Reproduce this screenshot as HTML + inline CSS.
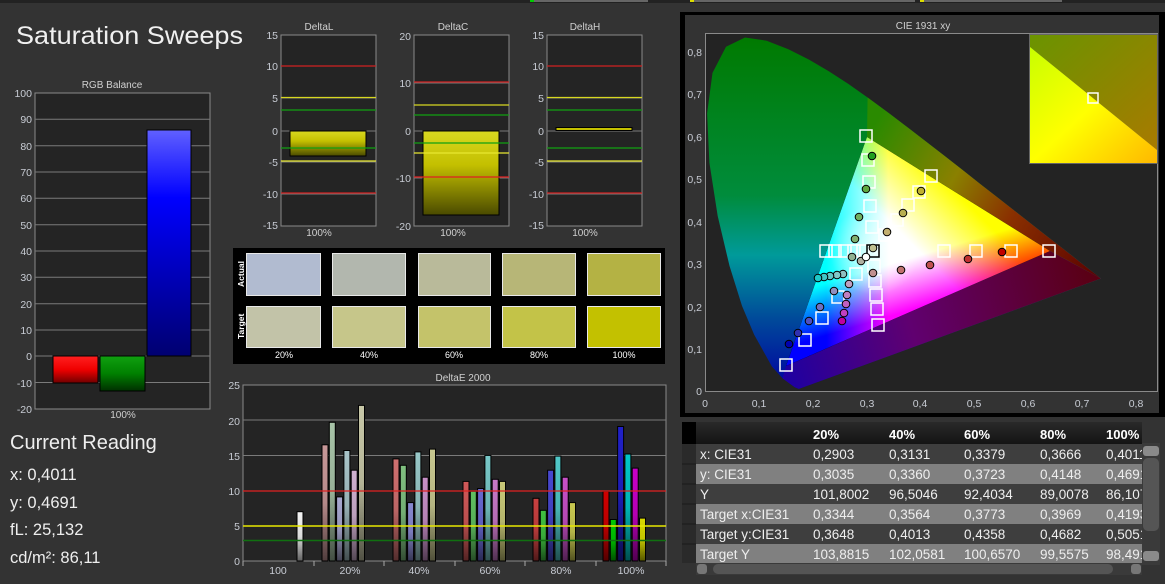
<!DOCTYPE html>
<html><head><meta charset="utf-8"><style>
html,body{margin:0;padding:0;background:#333;}
body{width:1165px;height:579px;overflow:hidden;position:relative;font-family:"Liberation Sans",sans-serif;}
svg text{font-family:"Liberation Sans",sans-serif;}
</style></head><body>
<svg width="1165" height="579" viewBox="0 0 1165 579" xmlns="http://www.w3.org/2000/svg">
<defs>
<clipPath id="tclip"><rect x="682" y="420" width="460" height="145"/></clipPath>
<linearGradient id="shade" x1="0" y1="0" x2="0" y2="1"><stop offset="0" stop-color="#000" stop-opacity="0"/><stop offset="0.5" stop-color="#000" stop-opacity="0.1"/><stop offset="1" stop-color="#000" stop-opacity="0.6"/></linearGradient>
<linearGradient id="gy" x1="0" y1="0" x2="0" y2="1"><stop offset="0" stop-color="#d8d820"/><stop offset="0.4" stop-color="#c4c000"/><stop offset="1" stop-color="#4a4a00"/></linearGradient>
<linearGradient id="gr" x1="0" y1="0" x2="0" y2="1"><stop offset="0" stop-color="#ff2020"/><stop offset="0.5" stop-color="#f00000"/><stop offset="1" stop-color="#700000"/></linearGradient>
<linearGradient id="gg" x1="0" y1="0" x2="0" y2="1"><stop offset="0" stop-color="#10a010"/><stop offset="0.5" stop-color="#008000"/><stop offset="1" stop-color="#003000"/></linearGradient>
<linearGradient id="gb" x1="0" y1="0" x2="0" y2="1"><stop offset="0" stop-color="#6060ff"/><stop offset="0.3" stop-color="#0000ff"/><stop offset="1" stop-color="#000070"/></linearGradient>
<linearGradient id="hs" x1="0" y1="37" x2="0" y2="389" gradientUnits="userSpaceOnUse"><stop offset="0" stop-color="#007a00"/><stop offset="0.45" stop-color="#008c3c"/><stop offset="0.62" stop-color="#009a9a"/><stop offset="0.8" stop-color="#004a9a"/><stop offset="1" stop-color="#0000a0"/></linearGradient>
<linearGradient id="rt" x1="867" y1="137" x2="1101" y2="278" gradientUnits="userSpaceOnUse"><stop offset="0" stop-color="#2a8a00"/><stop offset="0.35" stop-color="#8a8000"/><stop offset="0.6" stop-color="#8a3000"/><stop offset="1" stop-color="#5a0000"/></linearGradient>
<linearGradient id="bt" x1="786" y1="366" x2="1101" y2="278" gradientUnits="userSpaceOnUse"><stop offset="0" stop-color="#2000a0"/><stop offset="0.4" stop-color="#600070"/><stop offset="1" stop-color="#5a0010"/></linearGradient>
<linearGradient id="tR" x1="1050" y1="251" x2="826" y2="252" gradientUnits="userSpaceOnUse"><stop offset="0" stop-color="#ff0000"/><stop offset="0.72" stop-color="#ff0000"/><stop offset="1" stop-color="#000"/></linearGradient>
<linearGradient id="tG" x1="867" y1="137" x2="918" y2="308" gradientUnits="userSpaceOnUse"><stop offset="0" stop-color="#00ff00"/><stop offset="0.72" stop-color="#00ff00"/><stop offset="1" stop-color="#000"/></linearGradient>
<linearGradient id="tB" x1="786" y1="366" x2="958" y2="194" gradientUnits="userSpaceOnUse"><stop offset="0" stop-color="#0000ff"/><stop offset="0.72" stop-color="#0000ff"/><stop offset="1" stop-color="#000"/></linearGradient>
<radialGradient id="tW" cx="875" cy="250" r="45" gradientUnits="userSpaceOnUse"><stop offset="0" stop-color="#fff" stop-opacity="0.7"/><stop offset="1" stop-color="#fff" stop-opacity="0"/></radialGradient>
<linearGradient id="inU" x1="0" y1="0" x2="1" y2="1"><stop offset="0" stop-color="#6a9400"/><stop offset="1" stop-color="#a87a00"/></linearGradient>
<linearGradient id="inL" x1="0" y1="0" x2="1" y2="1"><stop offset="0" stop-color="#c8ff00"/><stop offset="0.5" stop-color="#ffff00"/><stop offset="1" stop-color="#ffb800"/></linearGradient>
<linearGradient id="th" x1="0" y1="0" x2="0" y2="1"><stop offset="0" stop-color="#2a2a2a"/><stop offset="1" stop-color="#141414"/></linearGradient>
</defs>

<rect x="0" y="0" width="1165" height="3" fill="#222"/>
<rect x="530" y="0" width="118" height="2" fill="#666"/><rect x="530" y="0" width="4" height="2" fill="#0c0"/>
<rect x="690" y="0" width="225" height="2" fill="#666"/><rect x="690" y="0" width="4" height="2" fill="#dd0"/>
<rect x="920" y="0" width="142" height="2" fill="#666"/><rect x="920" y="0" width="4" height="2" fill="#dd0"/>

<text x="16" y="44" font-size="25" fill="#f0f0f0" textLength="227" lengthAdjust="spacingAndGlyphs">Saturation Sweeps</text>

<!-- RGB Balance -->
<text x="112" y="88" font-size="10" fill="#d0d0d0" text-anchor="middle">RGB Balance</text>
<rect x="35" y="93" width="175" height="316" fill="#242424" stroke="#8a8a8a"/>
<g stroke="#7a7a7a" stroke-width="1">
<line x1="35" x2="210" y1="119.3" y2="119.3"/><line x1="35" x2="210" y1="145.7" y2="145.7"/><line x1="35" x2="210" y1="172" y2="172"/><line x1="35" x2="210" y1="198.3" y2="198.3"/><line x1="35" x2="210" y1="224.7" y2="224.7"/><line x1="35" x2="210" y1="251" y2="251"/><line x1="35" x2="210" y1="277.3" y2="277.3"/><line x1="35" x2="210" y1="303.7" y2="303.7"/><line x1="35" x2="210" y1="330" y2="330"/><line x1="35" x2="210" y1="356" y2="356"/><line x1="35" x2="210" y1="382.5" y2="382.5"/>
</g>
<g font-size="10.5" fill="#c8ccd4" text-anchor="end">
<text x="32" y="97">100</text><text x="32" y="123">90</text><text x="32" y="150">80</text><text x="32" y="176">70</text><text x="32" y="202">60</text><text x="32" y="229">50</text><text x="32" y="255">40</text><text x="32" y="281">30</text><text x="32" y="308">20</text><text x="32" y="334">10</text><text x="32" y="360">0</text><text x="32" y="387">-10</text><text x="32" y="413">-20</text>
</g>
<rect x="53" y="356" width="45" height="27" fill="url(#gr)" stroke="#000"/>
<rect x="100" y="356" width="45" height="35" fill="url(#gg)" stroke="#000"/>
<rect x="147" y="130" width="44" height="226" fill="url(#gb)" stroke="#000"/>
<text x="123" y="418" font-size="10" fill="#d0d0d0" text-anchor="middle">100%</text>

<g fill="#eeeeee">
<text x="10" y="449" font-size="20">Current Reading</text>
<text x="10" y="480" font-size="16.5">x: 0,4011</text>
<text x="10" y="508" font-size="16.5">y: 0,4691</text>
<text x="10" y="535" font-size="16.5">fL: 25,132</text>
<text x="10" y="563" font-size="16.5">cd/m²: 86,11</text>
</g>

<!-- DeltaL -->
<text x="319" y="30" font-size="10" fill="#d0d0d0" text-anchor="middle">DeltaL</text>
<rect x="281" y="35" width="95" height="191" fill="#242424" stroke="#8a8a8a"/>
<g stroke="#7a7a7a"><line x1="281" x2="376" y1="66" y2="66"/><line x1="281" x2="376" y1="98" y2="98"/><line x1="281" x2="376" y1="131" y2="131"/><line x1="281" x2="376" y1="162" y2="162"/><line x1="281" x2="376" y1="194" y2="194"/></g>
<rect x="290" y="131" width="76" height="25" fill="url(#gy)" stroke="#000"/>
<g stroke-width="1.3"><line x1="281" x2="376" y1="66" y2="66" stroke="#d02020"/><line x1="281" x2="376" y1="193" y2="193" stroke="#d02020"/><line x1="281" x2="376" y1="97.5" y2="97.5" stroke="#d8d820"/><line x1="281" x2="376" y1="161" y2="161" stroke="#e8e830"/><line x1="281" x2="376" y1="110" y2="110" stroke="#10a010"/><line x1="281" x2="376" y1="148" y2="148" stroke="#10a010"/></g>
<g font-size="10.5" fill="#c8ccd4" text-anchor="end"><text x="278" y="39">15</text><text x="278" y="70">10</text><text x="278" y="102">5</text><text x="278" y="135">0</text><text x="278" y="166">-5</text><text x="278" y="198">-10</text><text x="278" y="229">-15</text></g>
<text x="319" y="236" font-size="10" fill="#d0d0d0" text-anchor="middle">100%</text>

<!-- DeltaC -->
<text x="453" y="30" font-size="10" fill="#d0d0d0" text-anchor="middle">DeltaC</text>
<rect x="414" y="35" width="95" height="191" fill="#242424" stroke="#8a8a8a"/>
<g stroke="#7a7a7a"><line x1="414" x2="509" y1="83" y2="83"/><line x1="414" x2="509" y1="131" y2="131"/><line x1="414" x2="509" y1="178" y2="178"/></g>
<rect x="423" y="131" width="76" height="84" fill="url(#gy)" stroke="#000"/>
<g stroke-width="1.3"><line x1="414" x2="509" y1="82" y2="82" stroke="#d02020"/><line x1="414" x2="509" y1="177" y2="177" stroke="#e02020"/><line x1="414" x2="509" y1="105" y2="105" stroke="#d8d820"/><line x1="414" x2="509" y1="153" y2="153" stroke="#e8e830"/><line x1="414" x2="509" y1="115" y2="115" stroke="#10a010"/><line x1="414" x2="509" y1="143" y2="143" stroke="#10a010"/></g>
<g font-size="10.5" fill="#c8ccd4" text-anchor="end"><text x="411" y="40">20</text><text x="411" y="87">10</text><text x="411" y="135">0</text><text x="411" y="182">-10</text><text x="411" y="230">-20</text></g>
<text x="453" y="236" font-size="10" fill="#d0d0d0" text-anchor="middle">100%</text>

<!-- DeltaH -->
<text x="585" y="30" font-size="10" fill="#d0d0d0" text-anchor="middle">DeltaH</text>
<rect x="547" y="35" width="95" height="191" fill="#242424" stroke="#8a8a8a"/>
<g stroke="#7a7a7a"><line x1="547" x2="642" y1="66" y2="66"/><line x1="547" x2="642" y1="98" y2="98"/><line x1="547" x2="642" y1="131" y2="131"/><line x1="547" x2="642" y1="162" y2="162"/><line x1="547" x2="642" y1="194" y2="194"/></g>
<rect x="556" y="127.5" width="76" height="3" fill="#c4c000" stroke="#000"/>
<g stroke-width="1.3"><line x1="547" x2="642" y1="66" y2="66" stroke="#d02020"/><line x1="547" x2="642" y1="193" y2="193" stroke="#d02020"/><line x1="547" x2="642" y1="97.5" y2="97.5" stroke="#d8d820"/><line x1="547" x2="642" y1="161" y2="161" stroke="#e8e830"/><line x1="547" x2="642" y1="110" y2="110" stroke="#10a010"/><line x1="547" x2="642" y1="148" y2="148" stroke="#10a010"/></g>
<g font-size="10.5" fill="#c8ccd4" text-anchor="end"><text x="544" y="39">15</text><text x="544" y="70">10</text><text x="544" y="102">5</text><text x="544" y="135">0</text><text x="544" y="166">-5</text><text x="544" y="198">-10</text><text x="544" y="229">-15</text></g>
<text x="585" y="236" font-size="10" fill="#d0d0d0" text-anchor="middle">100%</text>

<!-- Swatches -->
<rect x="233" y="248" width="432" height="116" fill="#000"/>
<g stroke="#e8e8e8" stroke-width="1">
<rect x="246.5" y="253.5" width="74" height="42" fill="#b1bbd0"/><rect x="332.5" y="253.5" width="73" height="42" fill="#b2b7ae"/><rect x="418.5" y="253.5" width="72" height="42" fill="#b9ba9a"/><rect x="502.5" y="253.5" width="73" height="42" fill="#b7b677"/><rect x="587.5" y="253.5" width="73" height="42" fill="#b4b244"/>
<rect x="246.5" y="306.5" width="74" height="41" fill="#c2c3a8"/><rect x="332.5" y="306.5" width="73" height="41" fill="#c6c68a"/><rect x="418.5" y="306.5" width="72" height="41" fill="#c4c36a"/><rect x="502.5" y="306.5" width="73" height="41" fill="#c3c348"/><rect x="587.5" y="306.5" width="73" height="41" fill="#c3c100"/>
</g>
<g font-size="8.5" fill="#fff" font-weight="bold">
<text transform="translate(244,287) rotate(-90)">Actual</text>
<text transform="translate(244,339) rotate(-90)">Target</text>
</g>
<g font-size="9" fill="#fff" text-anchor="middle"><text x="284" y="358">20%</text><text x="369" y="358">40%</text><text x="454" y="358">60%</text><text x="539" y="358">80%</text><text x="624" y="358">100%</text></g>

<!-- DeltaE 2000 -->
<text x="463" y="381" font-size="10" fill="#d0d0d0" text-anchor="middle">DeltaE 2000</text>
<rect x="243" y="385" width="423" height="176" fill="#242424" stroke="#8a8a8a"/>
<g stroke="#7a7a7a"><line x1="243" x2="666" y1="420" y2="420"/><line x1="243" x2="666" y1="455.5" y2="455.5"/></g>
<g font-size="10.5" fill="#c8ccd4" text-anchor="end"><text x="240" y="389">25</text><text x="240" y="425">20</text><text x="240" y="460">15</text><text x="240" y="495">10</text><text x="240" y="530">5</text><text x="240" y="565">0</text></g>
<g stroke="#000" stroke-width="1">
<rect x="297" y="511.7" width="6" height="49.3" fill="#f4f4f4"/>
<rect x="322" y="444.8" width="6" height="116.2" fill="#c89898"/><rect x="329.3" y="422.3" width="6" height="138.7" fill="#a8c4a8"/><rect x="336.6" y="496.9" width="6" height="64.1" fill="#a8a8d0"/><rect x="343.9" y="450.5" width="6" height="110.5" fill="#a8c4c8"/><rect x="351.2" y="470.2" width="6" height="90.8" fill="#d0b0d0"/><rect x="358.5" y="405.4" width="6" height="155.6" fill="#c8c8a8"/>
<rect x="393" y="458.9" width="6" height="102.1" fill="#d07070"/><rect x="400.3" y="465.3" width="6" height="95.7" fill="#80c080"/><rect x="407.6" y="502.6" width="6" height="58.4" fill="#8888d0"/><rect x="414.9" y="451.9" width="6" height="109.1" fill="#98c8c8"/><rect x="422.2" y="477.2" width="6" height="83.8" fill="#c890c8"/><rect x="429.5" y="449.1" width="6" height="111.9" fill="#c8c890"/>
<rect x="463" y="481.4" width="6" height="79.6" fill="#d05858"/><rect x="470.3" y="491.3" width="6" height="69.7" fill="#60c060"/><rect x="477.6" y="488.5" width="6" height="72.5" fill="#6868d0"/><rect x="484.9" y="455.4" width="6" height="105.6" fill="#78c8c8"/><rect x="492.2" y="479.3" width="6" height="81.7" fill="#c878c8"/><rect x="499.5" y="481.4" width="6" height="79.6" fill="#c8c878"/>
<rect x="533" y="498.3" width="6" height="62.7" fill="#c84040"/><rect x="540.3" y="510.3" width="6" height="50.7" fill="#40c040"/><rect x="547.6" y="470.2" width="6" height="90.8" fill="#4848d0"/><rect x="554.9" y="456.1" width="6" height="104.9" fill="#50c8c8"/><rect x="562.2" y="477.2" width="6" height="83.8" fill="#c850c8"/><rect x="569.5" y="502.6" width="6" height="58.4" fill="#c8c850"/>
<rect x="603" y="491.3" width="6" height="69.7" fill="#d00000"/><rect x="610.3" y="519.5" width="6" height="41.5" fill="#00c800"/><rect x="617.6" y="426.5" width="6" height="134.5" fill="#2020c8"/><rect x="624.9" y="454" width="6" height="107" fill="#00c8c8"/><rect x="632.2" y="468.1" width="6" height="92.9" fill="#c800c8"/><rect x="639.5" y="518.1" width="6" height="42.9" fill="#d8d800"/>
</g>
<g fill="url(#shade)">
<rect x="297" y="511.7" width="6" height="49.3"/>
<rect x="322" y="444.8" width="6" height="116.2"/><rect x="329.3" y="422.3" width="6" height="138.7"/><rect x="336.6" y="496.9" width="6" height="64.1"/><rect x="343.9" y="450.5" width="6" height="110.5"/><rect x="351.2" y="470.2" width="6" height="90.8"/><rect x="358.5" y="405.4" width="6" height="155.6"/>
<rect x="393" y="458.9" width="6" height="102.1"/><rect x="400.3" y="465.3" width="6" height="95.7"/><rect x="407.6" y="502.6" width="6" height="58.4"/><rect x="414.9" y="451.9" width="6" height="109.1"/><rect x="422.2" y="477.2" width="6" height="83.8"/><rect x="429.5" y="449.1" width="6" height="111.9"/>
<rect x="463" y="481.4" width="6" height="79.6"/><rect x="470.3" y="491.3" width="6" height="69.7"/><rect x="477.6" y="488.5" width="6" height="72.5"/><rect x="484.9" y="455.4" width="6" height="105.6"/><rect x="492.2" y="479.3" width="6" height="81.7"/><rect x="499.5" y="481.4" width="6" height="79.6"/>
<rect x="533" y="498.3" width="6" height="62.7"/><rect x="540.3" y="510.3" width="6" height="50.7"/><rect x="547.6" y="470.2" width="6" height="90.8"/><rect x="554.9" y="456.1" width="6" height="104.9"/><rect x="562.2" y="477.2" width="6" height="83.8"/><rect x="569.5" y="502.6" width="6" height="58.4"/>
<rect x="603" y="491.3" width="6" height="69.7"/><rect x="610.3" y="519.5" width="6" height="41.5"/><rect x="617.6" y="426.5" width="6" height="134.5"/><rect x="624.9" y="454" width="6" height="107"/><rect x="632.2" y="468.1" width="6" height="92.9"/><rect x="639.5" y="518.1" width="6" height="42.9"/>
</g>
<line x1="243" x2="666" y1="491" y2="491" stroke="#e02020" stroke-width="1.3"/>
<line x1="243" x2="666" y1="526" y2="526" stroke="#e8e800" stroke-width="1.6"/>
<line x1="243" x2="666" y1="540.5" y2="540.5" stroke="#107010" stroke-width="1.6"/>
<g stroke="#aaa"><line x1="243" x2="243" y1="561" y2="566"/><line x1="314" x2="314" y1="561" y2="566"/><line x1="384" x2="384" y1="561" y2="566"/><line x1="455" x2="455" y1="561" y2="566"/><line x1="525" x2="525" y1="561" y2="566"/><line x1="596" x2="596" y1="561" y2="566"/><line x1="666" x2="666" y1="561" y2="566"/></g>
<g font-size="10.5" fill="#c8ccd4" text-anchor="middle"><text x="278" y="574">100</text><text x="350" y="574">20%</text><text x="419" y="574">40%</text><text x="490" y="574">60%</text><text x="561" y="574">80%</text><text x="631" y="574">100%</text></g>

<!-- CIE panel -->
<rect x="680" y="12" width="485" height="405" fill="#000"/>
<rect x="685" y="15" width="474" height="398" fill="#333"/>
<text x="923" y="29" font-size="10" fill="#d0d0d0" text-anchor="middle">CIE 1931 xy</text>
<rect x="705.5" y="33.5" width="452" height="358" fill="#232323" stroke="#8a8a8a"/>
<path d="M798.8,388.9 L794.8,387.2 L782.6,378.4 L771.9,366.5 L754.2,334.7 L742,305.9 L729.5,265.9 L717.7,216 L709.4,162.7 L707.1,113.4 L712.5,72.9 L726,46.7 L745,37.5 L766.6,40.7 L788.4,49.3 L809,59.6 L828.8,71.2 L848.3,83.9 L867.6,97.5 L886.8,111.6 L906.1,126.2 L925.3,141 L944.4,155.8 L963.1,170.4 L981.2,184.7 L998.6,198.3 L1015,211.1 L1030,222.9 L1043,233.1 L1054.4,242 L1063.9,249.4 L1071.6,255.4 L1077.7,260.3 L1082.6,264.1 L1086.6,267.2 L1101,278.5 Z" fill="url(#hs)"/>
<path d="M867,137 L867.6,97.5 L886.8,111.6 L906.1,126.2 L925.3,141 L944.4,155.8 L963.1,170.4 L981.2,184.7 L998.6,198.3 L1015,211.1 L1030,222.9 L1043,233.1 L1054.4,242 L1063.9,249.4 L1071.6,255.4 L1077.7,260.3 L1082.6,264.1 L1086.6,267.2 L1101,278.5 L1050,251 Z" fill="url(#rt)"/>
<path d="M786,366 L1050,251 L1101,278.5 L798.8,388.9 L794.8,387.2 L782.6,378.4 Z" fill="url(#bt)"/>
<g style="isolation:isolate">
<polygon points="1050,251 867,137 786,366" fill="#000"/>
<polygon points="1050,251 867,137 786,366" fill="url(#tR)" style="mix-blend-mode:screen"/>
<polygon points="1050,251 867,137 786,366" fill="url(#tG)" style="mix-blend-mode:screen"/>
<polygon points="1050,251 867,137 786,366" fill="url(#tB)" style="mix-blend-mode:screen"/>
</g>
<polygon points="1050,251 867,137 786,366" fill="url(#tW)"/>
<rect x="1029" y="34" width="129" height="130" fill="#666"/>
<polygon points="1030,35 1157,35 1157,150 1030,47" fill="url(#inU)"/>
<polygon points="1030,47 1157,150 1157,163 1030,163" fill="url(#inL)"/>
<rect x="1088" y="93" width="10" height="10" fill="none" stroke="#fff" stroke-width="1.5"/>
<g font-size="10.5" fill="#c8ccd4" text-anchor="end"><text x="702" y="56">0,8</text><text x="702" y="98">0,7</text><text x="702" y="141">0,6</text><text x="702" y="183">0,5</text><text x="702" y="226">0,4</text><text x="702" y="268">0,3</text><text x="702" y="311">0,2</text><text x="702" y="353">0,1</text><text x="702" y="395">0</text></g>
<g font-size="10.5" fill="#c8ccd4" text-anchor="middle"><text x="705" y="407">0</text><text x="759" y="407">0,1</text><text x="813" y="407">0,2</text><text x="867" y="407">0,3</text><text x="920" y="407">0,4</text><text x="974" y="407">0,5</text><text x="1028" y="407">0,6</text><text x="1082" y="407">0,7</text><text x="1136" y="407">0,8</text></g>
<g fill="none" stroke="#fff" stroke-width="1.5">
<rect x="860" y="130" width="12" height="12"/><rect x="862" y="154" width="12" height="12"/><rect x="863" y="176" width="12" height="12"/><rect x="864" y="200" width="12" height="12"/><rect x="866" y="221" width="12" height="12"/><rect x="879" y="229" width="12" height="12"/><rect x="891" y="214" width="12" height="12"/><rect x="902" y="199" width="12" height="12"/><rect x="913" y="186" width="12" height="12"/><rect x="925" y="170" width="12" height="12"/>
<rect x="820" y="245" width="12" height="12"/><rect x="829" y="245" width="12" height="12"/><rect x="839" y="245" width="12" height="12"/><rect x="848" y="245" width="12" height="12"/><rect x="857" y="245" width="12" height="12"/><rect x="901" y="245" width="12" height="12"/><rect x="938" y="245" width="12" height="12"/><rect x="970" y="245" width="12" height="12"/><rect x="1005" y="245" width="12" height="12"/><rect x="1043" y="245" width="12" height="12"/>
<rect x="868" y="260" width="12" height="12"/><rect x="869" y="275" width="12" height="12"/><rect x="870" y="289" width="12" height="12"/><rect x="871" y="303" width="12" height="12"/><rect x="872" y="319" width="12" height="12"/><rect x="850" y="268" width="12" height="12"/><rect x="832" y="291" width="12" height="12"/><rect x="816" y="312" width="12" height="12"/><rect x="799" y="334" width="12" height="12"/><rect x="780" y="359" width="12" height="12"/>
</g>
<rect x="867" y="245" width="12" height="12" fill="none" stroke="#000" stroke-width="1.5"/>
<g stroke="#000" stroke-width="1">
<circle cx="872" cy="156" r="3.8" fill="#20a020"/><circle cx="866" cy="189" r="3.8" fill="#60a840"/><circle cx="859" cy="217" r="3.8" fill="#70b060"/><circle cx="855" cy="239" r="3.8" fill="#80b070"/><circle cx="852" cy="257" r="3.8" fill="#90b090"/><circle cx="861" cy="261" r="3.8" fill="#b0b0a0"/><circle cx="866" cy="257" r="3.8" fill="#fff"/><circle cx="873" cy="248" r="3.8" fill="#c0c090"/><circle cx="887" cy="232" r="3.8" fill="#c0b070"/><circle cx="903" cy="213" r="3.8" fill="#b8b050"/><circle cx="921" cy="191" r="3.8" fill="#c0b030"/>
<circle cx="873" cy="273" r="3.8" fill="#c09090"/><circle cx="901" cy="270" r="3.8" fill="#c07070"/><circle cx="930" cy="265" r="3.8" fill="#c05050"/><circle cx="968" cy="259" r="3.8" fill="#c03030"/><circle cx="1002" cy="252" r="3.8" fill="#c00000"/>
<circle cx="843" cy="274" r="3.8" fill="#90c0c0"/><circle cx="837" cy="275" r="3.8" fill="#80c8c8"/><circle cx="830" cy="276" r="3.8" fill="#60c8c8"/><circle cx="824" cy="277" r="3.8" fill="#40c8c8"/><circle cx="818" cy="278" r="3.8" fill="#20c8c8"/>
<circle cx="834" cy="291" r="3.8" fill="#9090c0"/><circle cx="820" cy="307" r="3.8" fill="#7070c0"/><circle cx="809" cy="321" r="3.8" fill="#5050c0"/><circle cx="798" cy="333" r="3.8" fill="#3030b0"/><circle cx="789" cy="344" r="3.8" fill="#0000b0"/>
<circle cx="849" cy="284" r="3.8" fill="#c0a0c0"/><circle cx="847" cy="295" r="3.8" fill="#c080c0"/><circle cx="846" cy="304" r="3.8" fill="#c060c0"/><circle cx="844" cy="313" r="3.8" fill="#c040c0"/><circle cx="842" cy="321" r="3.8" fill="#c000a0"/>
</g>

<!-- Table -->
<rect x="682" y="422" width="460" height="22" fill="url(#th)"/>
<rect x="682" y="422" width="14" height="22" fill="#000"/>
<rect x="696" y="444" width="446" height="20" fill="#3e3e3e"/>
<rect x="696" y="464" width="446" height="20" fill="#808080"/>
<rect x="696" y="484" width="446" height="20" fill="#3e3e3e"/>
<rect x="696" y="504" width="446" height="20" fill="#808080"/>
<rect x="696" y="524" width="446" height="20" fill="#3e3e3e"/>
<rect x="696" y="544" width="446" height="19" fill="#808080"/>
<rect x="682" y="444" width="14" height="119" fill="#2a2a2a"/>
<g stroke="#1a1a1a"><line x1="682" x2="696" y1="464" y2="464"/><line x1="682" x2="696" y1="484" y2="484"/><line x1="682" x2="696" y1="504" y2="504"/><line x1="682" x2="696" y1="524" y2="524"/><line x1="682" x2="696" y1="544" y2="544"/></g>
<g clip-path="url(#tclip)">
<g font-size="13" fill="#fff" font-weight="bold"><text x="813" y="439">20%</text><text x="889" y="439">40%</text><text x="964" y="439">60%</text><text x="1040" y="439">80%</text><text x="1106" y="439">100%</text></g>
<g font-size="13.5" fill="#eeeeee">
<text x="700" y="459">x: CIE31</text><text x="813" y="459">0,2903</text><text x="889" y="459">0,3131</text><text x="964" y="459">0,3379</text><text x="1040" y="459">0,3666</text><text x="1106" y="459">0,4011</text>
<text x="700" y="479">y: CIE31</text><text x="813" y="479">0,3035</text><text x="889" y="479">0,3360</text><text x="964" y="479">0,3723</text><text x="1040" y="479">0,4148</text><text x="1106" y="479">0,4691</text>
<text x="700" y="499">Y</text><text x="813" y="499">101,8002</text><text x="889" y="499">96,5046</text><text x="964" y="499">92,4034</text><text x="1040" y="499">89,0078</text><text x="1106" y="499">86,1077</text>
<text x="700" y="519">Target x:CIE31</text><text x="813" y="519">0,3344</text><text x="889" y="519">0,3564</text><text x="964" y="519">0,3773</text><text x="1040" y="519">0,3969</text><text x="1106" y="519">0,4193</text>
<text x="700" y="539">Target y:CIE31</text><text x="813" y="539">0,3648</text><text x="889" y="539">0,4013</text><text x="964" y="539">0,4358</text><text x="1040" y="539">0,4682</text><text x="1106" y="539">0,5051</text>
<text x="700" y="559">Target Y</text><text x="813" y="559">103,8815</text><text x="889" y="559">102,0581</text><text x="964" y="559">100,6570</text><text x="1040" y="559">99,5575</text><text x="1106" y="559">98,4911</text>
</g>
</g>
<rect x="1142" y="443" width="18" height="122" fill="#3a3a3a"/>
<rect x="1143" y="446" width="16" height="10" rx="3" fill="#8a8a8a"/>
<rect x="1143" y="458" width="16" height="73" rx="5" fill="#555"/>
<rect x="1143" y="551" width="16" height="10" rx="3" fill="#8a8a8a"/>
<rect x="696" y="563" width="446" height="12" fill="#3a3a3a"/>
<rect x="697" y="564" width="10" height="10" rx="3" fill="#777"/>
<rect x="713" y="564" width="400" height="10" rx="5" fill="#555"/>
<rect x="1131" y="564" width="10" height="10" rx="3" fill="#777"/>
</svg>
</body></html>
